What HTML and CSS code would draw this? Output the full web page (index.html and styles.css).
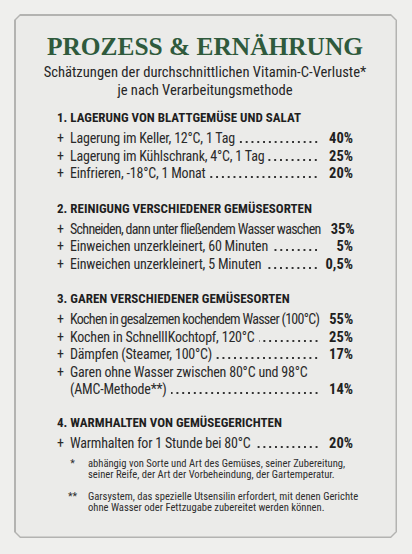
FILE: index.html
```html
<!DOCTYPE html>
<html lang="de">
<head>
<meta charset="utf-8">
<link rel="stylesheet" href="styles.css">
</head>
<body>
<div class="frame">
  <div class="card">
    <h1 class="title">PROZESS &amp; ERNÄHRUNG</h1>
    <p class="subtitle">Schätzungen der durchschnittlichen Vitamin-C-Verluste*<br>je nach Verarbeitungsmethode</p>

    <section class="group">
      <h2 class="heading">1. LAGERUNG VON BLATTGEMÜSE UND SALAT</h2>
      <div class="row"><span class="plus">+</span><span class="label">Lagerung im Keller, 12°C, 1 Tag</span><span class="dots"></span><span class="val">40%</span></div>
      <div class="row"><span class="plus">+</span><span class="label">Lagerung im Kühlschrank, 4°C, 1 Tag</span><span class="dots"></span><span class="val">25%</span></div>
      <div class="row"><span class="plus">+</span><span class="label">Einfrieren, -18°C, 1 Monat</span><span class="dots"></span><span class="val">20%</span></div>
    </section>

    <section class="group">
      <h2 class="heading">2. REINIGUNG VERSCHIEDENER GEMÜSESORTEN</h2>
      <div class="row"><span class="plus">+</span><span class="label tight">Schneiden, dann unter fließendem Wasser waschen</span><span class="val">35%</span></div>
      <div class="row"><span class="plus">+</span><span class="label">Einweichen unzerkleinert, 60 Minuten</span><span class="dots"></span><span class="val">5%</span></div>
      <div class="row"><span class="plus">+</span><span class="label">Einweichen unzerkleinert, 5 Minuten</span><span class="dots"></span><span class="val">0,5%</span></div>
    </section>

    <section class="group">
      <h2 class="heading">3. GAREN VERSCHIEDENER GEMÜSESORTEN</h2>
      <div class="row"><span class="plus">+</span><span class="label tight">Kochen in gesalzemen kochendem Wasser (100°C)</span><span class="val">55%</span></div>
      <div class="row"><span class="plus">+</span><span class="label">Kochen in SchnellIKochtopf, 120°C</span><span class="dots"></span><span class="val">25%</span></div>
      <div class="row"><span class="plus">+</span><span class="label">Dämpfen (Steamer, 100°C)</span><span class="dots"></span><span class="val">17%</span></div>
      <div class="row multi"><span class="plus">+</span>
        <div class="stack">
          <span class="label">Garen ohne Wasser zwischen 80°C und 98°C</span>
          <div class="row"><span class="label">(AMC-Methode**)</span><span class="dots"></span><span class="val">14%</span></div>
        </div>
      </div>
    </section>

    <section class="group last">
      <h2 class="heading">4. WARMHALTEN VON GEMÜSEGERICHTEN</h2>
      <div class="row"><span class="plus">+</span><span class="label">Warmhalten for 1 Stunde bei 80°C</span><span class="dots"></span><span class="val">20%</span></div>
    </section>

    <div class="notes">
      <div class="note"><span class="mark">*</span><p>abhängig von Sorte und Art des Gemüses, seiner Zubereitung,<br>seiner Reife, der Art der Vorbeheindung, der Gartemperatur.</p></div>
      <div class="note"><span class="mark">**</span><p>Garsystem, das spezielle Utsensilin erfordert, mit denen Gerichte<br>ohne Wasser oder Fettzugabe zubereitet werden können.</p></div>
    </div>
  </div>
</div>
</body>
</html>
```

FILE: styles.css
```css
* { box-sizing: border-box; }
html, body { margin: 0; padding: 0; }
body {
  background: #efefed;
  width: 412px;
  height: 554px;
  overflow: hidden;
  font-family: Roboto, "Liberation Sans", sans-serif;
  font-stretch: condensed;
  color: #2a2a2a;
}
.frame {
  margin: 14px 15px 0 14px;
  height: 524px;
  background: #b3b3b1;
  padding: 1.5px;
  clip-path: polygon(6px 0, calc(100% - 6px) 0, 100% 6px, 100% calc(100% - 6px), calc(100% - 6px) 100%, 6px 100%, 0 calc(100% - 6px), 0 6px);
}
.card {
  height: 100%;
  background: #ebebe9;
  clip-path: polygon(5px 0, calc(100% - 5px) 0, 100% 5px, 100% calc(100% - 5px), calc(100% - 5px) 100%, 5px 100%, 0 calc(100% - 5px), 0 5px);
  padding: 15.5px 42.5px 0 41.5px;
  display: flex;
  flex-direction: column;
}
.title {
  font-family: "Liberation Serif", serif;
  font-stretch: normal;
  font-weight: bold;
  font-size: 25.4px;
  line-height: 30px;
  color: #2f5a3c;
  text-align: center;
  margin: 0 -30px;
}
.subtitle {
  margin: 2px -30px 0;
  text-align: center;
  font-size: 14.6px;
  line-height: 18px;
  color: #262626;
}
.group { margin-top: 17px; }
.group:first-of-type { margin-top: 10px; }
.group.last { margin-top: 15px; }
.heading {
  margin: 0 0 3px;
  font-size: 13px;
  line-height: 18px;
  font-weight: bold;
  color: #1f1f1f;
  white-space: nowrap;
}
.row {
  display: flex;
  align-items: baseline;
  font-size: 14px;
  line-height: 17.5px;
}
.plus { width: 13px; flex: none; }
.label { white-space: nowrap; letter-spacing: -0.2px; }
.label.tight { letter-spacing: -0.7px; }
.dots {
  flex: 1;
  height: 2px;
  margin: 0 0 0 4px;
  background-image: radial-gradient(circle at 50% 50%, #333 0.8px, rgba(51,51,51,0) 1.25px);
  background-size: 5.8px 2px;
  background-repeat: repeat-x;
  background-position: right bottom;
}
.val {
  flex: none;
  min-width: 34px;
  margin-left: auto;
  text-align: right;
  font-weight: bold;
  font-size: 14.5px;
  color: #1f1f1f;
}
.multi { align-items: flex-start; }
.stack { flex: 1; display: flex; flex-direction: column; }
.notes { margin: 6px -30px 0 10px; }
.note {
  display: flex;
  font-size: 10.6px;
  line-height: 11px;
  margin-bottom: 11px;
  color: #2e2e2e;
  white-space: nowrap;
}
.mark { width: 11px; flex: none; text-align: center; margin-right: 10px; }
.note p { margin: 0; }
```
